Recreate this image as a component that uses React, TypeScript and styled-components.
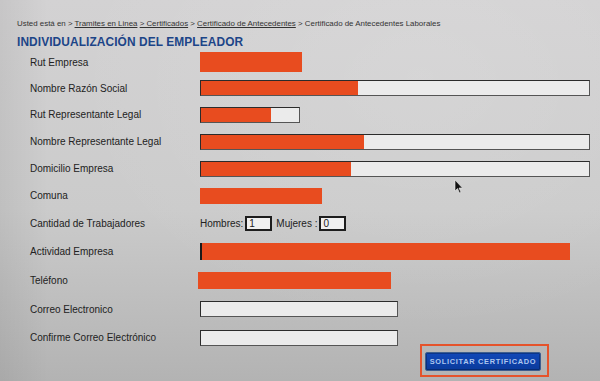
import styled, { createGlobalStyle } from 'styled-components';

const GlobalStyle = createGlobalStyle`
  html, body {
    margin: 0;
    padding: 0;
  }
  body {
    font-family: "Liberation Sans", Arial, sans-serif;
  }
`;

const Screen = styled.div`
  position: relative;
  width: 600px;
  height: 381px;
  overflow: hidden;
  background:
    radial-gradient(ellipse at 70% 20%, rgba(255, 255, 255, 0.12), transparent 60%),
    linear-gradient(to right, rgba(0, 0, 0, 0.06), transparent 8%),
    linear-gradient(to bottom, #d3d2d3 0%, #cbcbcb 55%, #b3b3b3 100%);
  padding: 19px 0 0 17px;
  box-sizing: border-box;
  color: #222;
`;

const Breadcrumb = styled.div`
  font-size: 7.9px;
  color: #333;
  white-space: nowrap;
  line-height: 10px;

  a {
    color: #333;
    text-decoration: underline;
  }
`;

const Title = styled.h2`
  margin: 6px 0 0;
  font-size: 11.9px;
  font-weight: 700;
  color: #1c4588;
  letter-spacing: 0.1px;
  line-height: 14px;
`;

const Form = styled.div`
  display: flex;
  flex-direction: column;
  padding-left: 13px;
`;

const Row = styled.div<{ $h: number }>`
  display: grid;
  grid-template-columns: 170px 1fr;
  align-items: center;
  height: ${p => p.$h}px;
`;

const Label = styled.div`
  font-size: 10px;
  color: #222;
`;

const Cell = styled.div<{ $shift?: number }>`
  display: flex;
  align-items: center;
  gap: 2px;
  margin-left: ${p => p.$shift || 0}px;
`;

const Field = styled.div<{ $w: number; $h?: number; $bare?: boolean }>`
  display: flex;
  width: ${p => p.$w}px;
  height: ${p => p.$h || 16}px;
  box-sizing: border-box;
  border: ${p => (p.$bare ? 'none' : '1px solid #2b2b2b')};
  border-bottom-color: #555;
  border-right-color: #555;
  background: ${p => (p.$bare ? 'transparent' : '#ebebeb')};
`;

const Redaction = styled.div<{ $w: number; $edge?: boolean }>`
  width: ${p => p.$w}px;
  height: 100%;
  background: #e84c1f;
  border-left: ${p => (p.$edge ? '2px solid #1a1a1a' : 'none')};
  box-sizing: border-box;
`;

const Small = styled.span<{ $gap?: number }>`
  font-size: 10px;
  color: #222;
  margin-left: ${p => p.$gap || 0}px;
`;

const SmallInput = styled.div`
  width: 27px;
  height: 15px;
  box-sizing: border-box;
  border: 2px solid #1d1d1d;
  background: #f0f0f0;
  font-size: 10px;
  line-height: 11px;
  padding-left: 2px;
`;

const Footer = styled.div`
  display: flex;
  margin: -7px 0 0 403px;
`;

const Highlight = styled.div`
  border: 2px solid #e5532b;
  padding: 4px 6px 4px 3px;
`;

const Button = styled.button`
  width: 116px;
  height: 19px;
  border: 1px solid #3e5f8f;
  border-radius: 2px;
  background: linear-gradient(to bottom, #1148b8, #0a3a9c);
  box-shadow: inset 0 0 0 1px rgba(0, 0, 0, 0.25);
  color: #aec6ee;
  font-family: "Liberation Sans", Arial, sans-serif;
  font-size: 7.4px;
  font-weight: 700;
  letter-spacing: 0.7px;
  padding: 0;
  cursor: pointer;
`;

const Cursor = styled.svg`
  position: absolute;
  left: 454px;
  top: 179px;
`;

export default function App() {
  return (
    <>
      <GlobalStyle />
      <Screen>
        <Breadcrumb>
          Usted está en &gt; <a>Tramites en Linea</a> <a>&gt; Certificados</a> &gt;{' '}
          <a>Certificado de Antecedentes</a> &gt; Certificado de Antecedentes Laborales
        </Breadcrumb>
        <Title>INDIVIDUALIZACIÓN DEL EMPLEADOR</Title>
        <Form>
          <Row $h={26}>
            <Label>Rut Empresa</Label>
            <Cell><Field $bare $w={102} $h={20}><Redaction $w={102} /></Field></Cell>
          </Row>
          <Row $h={26}>
            <Label>Nombre Razón Social</Label>
            <Cell><Field $w={390}><Redaction $w={157} /></Field></Cell>
          </Row>
          <Row $h={27}>
            <Label>Rut Representante Legal</Label>
            <Cell><Field $w={100}><Redaction $w={70} /></Field></Cell>
          </Row>
          <Row $h={27}>
            <Label>Nombre Representante Legal</Label>
            <Cell><Field $w={390}><Redaction $w={163} /></Field></Cell>
          </Row>
          <Row $h={27}>
            <Label>Domicilio Empresa</Label>
            <Cell><Field $w={390}><Redaction $w={150} /></Field></Cell>
          </Row>
          <Row $h={27}>
            <Label>Comuna</Label>
            <Cell><Field $bare $w={122}><Redaction $w={122} /></Field></Cell>
          </Row>
          <Row $h={28}>
            <Label>Cantidad de Trabajadores</Label>
            <Cell>
              <Small>Hombres:</Small>
              <SmallInput>1</SmallInput>
              <Small $gap={2}>Mujeres :</Small>
              <SmallInput>0</SmallInput>
            </Cell>
          </Row>
          <Row $h={29}>
            <Label>Actividad Empresa</Label>
            <Cell><Field $bare $w={370} $h={17}><Redaction $w={370} $edge /></Field></Cell>
          </Row>
          <Row $h={28}>
            <Label>Teléfono</Label>
            <Cell $shift={-2}><Field $bare $w={193} $h={17}><Redaction $w={193} /></Field></Cell>
          </Row>
          <Row $h={30}>
            <Label>Correo Electronico</Label>
            <Cell><Field $w={198} /></Cell>
          </Row>
          <Row $h={27}>
            <Label>Confirme Correo Electrónico</Label>
            <Cell><Field $w={198} /></Cell>
          </Row>
        </Form>
        <Footer>
          <Highlight>
            <Button>SOLICITAR CERTIFICADO</Button>
          </Highlight>
        </Footer>
        <Cursor width="10" height="15" viewBox="0 0 10 15">
          <path d="M1 1 L1 12 L3.5 9.5 L5.5 14 L7 13.3 L5 9 L8.5 9 Z" fill="#111" stroke="#eee" strokeWidth="0.6" />
        </Cursor>
      </Screen>
    </>
  );
}
